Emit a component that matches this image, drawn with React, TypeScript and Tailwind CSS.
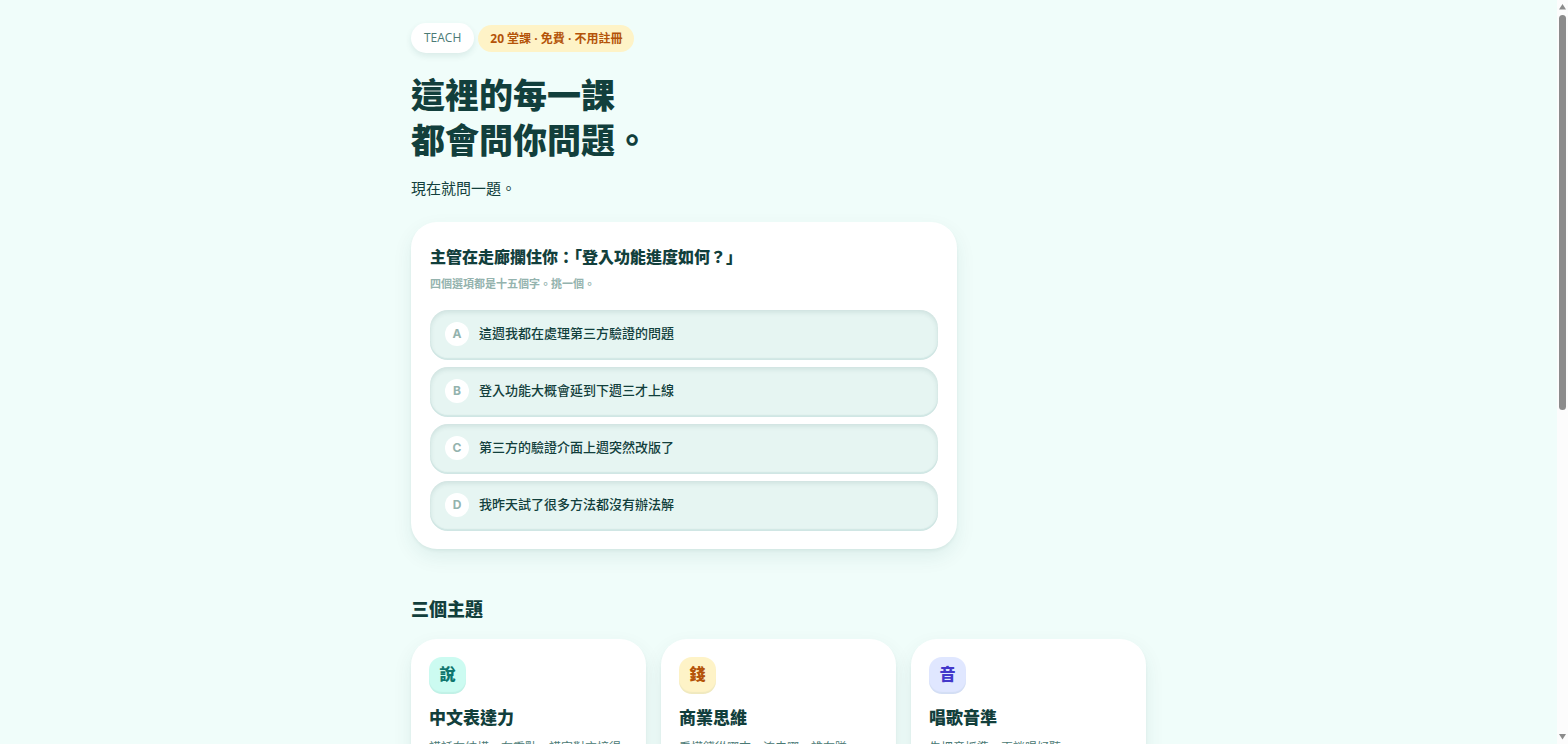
import clsx from "clsx";

const options = [
    { id: "A", text: "這週我都在處理第三方驗證的問題" },
    { id: "B", text: "登入功能大概會延到下週三才上線" },
    { id: "C", text: "第三方的驗證介面上週突然改版了" },
    { id: "D", text: "我昨天試了很多方法都沒有辦法解" },
];

const topics = [
    {
        icon: "說",
        title: "中文表達力",
        text: "講話有結構、有重點，講完對方接得住。",
        color: "bg-[#ccfbf1] text-[#0f766e]",
    },
    {
        icon: "錢",
        title: "商業思維",
        text: "看懂錢從哪來、流去哪、誰在賺。",
        color: "bg-[#fef3c7] text-[#b45309]",
    },
    {
        icon: "音",
        title: "唱歌音準",
        text: "先把音抓準，再談唱好聽。",
        color: "bg-[#e0e7ff] text-[#4338ca]",
    },
];

function Quiz() {
    return (
        <section className="mt-[22px] max-w-[546px] rounded-[26px] bg-white px-[19px] pt-[23px] pb-[18px] shadow-[0_8px_20px_rgba(19,78,74,0.08),0_2px_3px_rgba(19,78,74,0.06)]">
            <h2 className="text-[16px] leading-6 font-black">主管在走廊攔住你：「登入功能進度如何？」</h2>
            <p className="mt-[5px] text-[11px] leading-5 font-bold text-[#94b3ae]">四個選項都是十五個字。挑一個。</p>
            <div className="mt-4 flex flex-col gap-[7px]">
                {options.map((option) => (
                    <button
                        key={option.id}
                        type="button"
                        className="flex h-[50px] items-center gap-[10px] rounded-[18px] bg-[#e6f5f2] px-[15px] pb-[2px] text-left text-[13px] font-medium shadow-[inset_0_2px_5px_rgba(19,78,74,0.12),inset_0_-2px_1px_rgba(15,118,110,0.08)]"
                    >
                        <span className="flex size-6 shrink-0 items-center justify-center rounded-full bg-white font-[Inter,sans-serif] text-[12px] font-bold text-[#94b3ae]">
                            {option.id}
                        </span>
                        {option.text}
                    </button>
                ))}
            </div>
        </section>
    );
}

function TopicCard({ topic }: { topic: (typeof topics)[number] }) {
    return (
        <a
            href="#"
            className="block rounded-[26px] bg-white p-[18px] shadow-[0_8px_20px_rgba(19,78,74,0.08),0_2px_3px_rgba(19,78,74,0.06)]"
        >
            <div
                className={clsx(
                    "flex size-[37px] items-center justify-center rounded-[13px] pb-1 text-[16px] font-black shadow-[inset_0_-2px_1px_rgba(19,78,74,0.06)]",
                    topic.color,
                )}
            >
                {topic.icon}
            </div>
            <h3 className="mt-3 text-[17px] leading-6 font-black">{topic.title}</h3>
            <p className="mt-2 text-[12px] leading-5 text-[#4b7a75]">{topic.text}</p>
        </a>
    );
}

function Scrollbar() {
    return (
        <div className="flex w-[11px] shrink-0 flex-col items-center bg-[#fcfcfc] py-1" aria-hidden="true">
            <svg width="7" height="6" viewBox="0 0 7 6" fill="#8b8b8b">
                <path d="M3.5 0 7 5.5H0z" />
            </svg>
            <div className="mt-[5px] flex-1">
                <div className="h-[55%] w-[7px] rounded-full bg-[#8b8b8b]" />
            </div>
            <svg width="7" height="6" viewBox="0 0 7 6" fill="#8b8b8b">
                <path d="M3.5 5.5 0 0h7z" />
            </svg>
        </div>
    );
}

export default function App() {
    return (
        <div className="flex h-screen overflow-hidden bg-[#f0fdfa] font-['Open_Sans','Noto_Sans_CJK_TC',sans-serif] text-[#134e4a]">
            <main className="min-w-0 flex-1 overflow-hidden">
                <div className="mx-auto w-full max-w-[735px] pt-[23px] text-[#123f3c]">
                    <div className="flex items-center gap-1">
                        <a
                            href="#"
                            className="rounded-full bg-white px-[13px] text-[12px] leading-[30px] font-medium text-[#4b7a75] shadow-[0_3px_6px_rgba(19,78,74,0.10)]"
                        >
                            TEACH
                        </a>
                        <span className="rounded-full bg-[#fef3c7] px-3 text-[12px] leading-[27px] font-bold text-[#b45309]">
                            20 堂課 · 免費 · 不用註冊
                        </span>
                    </div>
                    <h1 className="mt-5 text-[34px] leading-[45px] font-black">
                        這裡的每一課
                        <br />
                        都會問你問題。
                    </h1>
                    <p className="mt-[13px] text-[15px] leading-6">現在就問一題。</p>
                    <Quiz />
                    <h2 className="mt-12 mb-[18px] text-[18px] leading-6 font-black">三個主題</h2>
                    <div className="grid grid-cols-3 gap-[15px]">
                        {topics.map((topic) => (
                            <TopicCard key={topic.title} topic={topic} />
                        ))}
                    </div>
                </div>
            </main>
            <Scrollbar />
        </div>
    );
}
